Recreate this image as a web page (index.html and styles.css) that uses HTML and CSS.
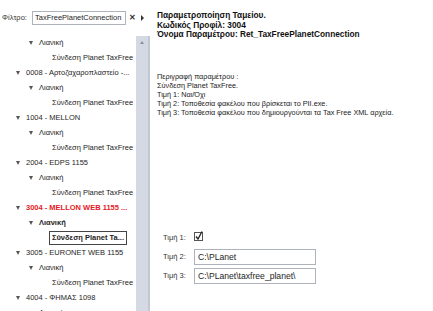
FILE: index.html
```html
<!DOCTYPE html>
<html lang="el">
<head>
  <meta charset="UTF-8">
  <title>Παραμετροποίηση Ταμείου</title>
  <link rel="stylesheet" href="styles.css">
</head>
<body>
  <div class="app">

    <!-- left: filter + tree -->
    <div class="side">
      <div class="filter">
        <span class="filter-label">Φίλτρο:</span>
        <div class="filter-box">TaxFreePlanetConnection</div>
        <span class="filter-clear">✕</span>
        <span class="filter-go"></span>
      </div>
      <div class="tree-wrap">
        <ul class="tree">
          <li class="node lvl2"><i class="arrow"></i>Λιανική</li>
          <li class="node lvl3">Σύνδεση Planet TaxFree</li>
          <li class="node lvl1"><i class="arrow"></i>0008 - Αρτοζαχαροπλαστείο -...</li>
          <li class="node lvl2"><i class="arrow"></i>Λιανική</li>
          <li class="node lvl3">Σύνδεση Planet TaxFree</li>
          <li class="node lvl1"><i class="arrow"></i>1004 - MELLON</li>
          <li class="node lvl2"><i class="arrow"></i>Λιανική</li>
          <li class="node lvl3">Σύνδεση Planet TaxFree</li>
          <li class="node lvl1"><i class="arrow"></i>2004 - EDPS 1155</li>
          <li class="node lvl2"><i class="arrow"></i>Λιανική</li>
          <li class="node lvl3">Σύνδεση Planet TaxFree</li>
          <li class="node lvl1 active"><i class="arrow"></i>3004 - MELLON WEB 1155 ...</li>
          <li class="node lvl2 bold"><i class="arrow"></i>Λιανική</li>
          <li class="node lvl3"><span class="selected">Σύνδεση Planet Ta...</span></li>
          <li class="node lvl1"><i class="arrow"></i>3005 - EURONET WEB 1155</li>
          <li class="node lvl2"><i class="arrow"></i>Λιανική</li>
          <li class="node lvl3">Σύνδεση Planet TaxFree</li>
          <li class="node lvl1"><i class="arrow"></i>4004 - ΦΗΜΑΣ 1098</li>
          <li class="node lvl2"><i class="arrow"></i>Λιανική</li>
        </ul>
        <div class="scrollbar">
          <span class="scroll-up"></span>
        </div>
      </div>
    </div>

    <!-- right: parameter details -->
    <div class="main">
      <div class="header">
        <div>Παραμετροποίηση Ταμείου.</div>
        <div>Κωδικός Προφίλ: 3004</div>
        <div>Όνομα Παραμέτρου: Ret_TaxFreePlanetConnection</div>
      </div>
      <div class="desc">
        <div>Περιγραφή παραμέτρου :</div>
        <div>Σύνδεση Planet TaxFree.</div>
        <div>Τιμή 1: Ναι/Όχι</div>
        <div>Τιμή 2: Τοποθεσία φακέλου που βρίσκεται το PII.exe.</div>
        <div>Τιμή 3: Τοποθεσία φακέλου που δημιουργούνται τα Tax Free XML αρχεία.</div>
      </div>
      <div class="values">
        <div class="value-row">
          <span class="value-label">Τιμή 1:</span>
          <span class="check">
            <svg width="9" height="10" viewBox="0 0 9 10"><rect x="0.5" y="1.5" width="8" height="8" fill="#fff" stroke="#555"/><path d="M2 5.5 L4 8 L8 0.5" fill="none" stroke="#222" stroke-width="1.3"/></svg>
          </span>
        </div>
        <div class="value-row">
          <span class="value-label">Τιμή 2:</span>
          <div class="value-box">C:\PLanet</div>
        </div>
        <div class="value-row">
          <span class="value-label">Τιμή 3:</span>
          <div class="value-box">C:\PLanet\taxfree_planet\</div>
        </div>
      </div>
    </div>

  </div>
</body>
</html>
```

FILE: styles.css
```css
html, body {
  margin: 0;
  padding: 0;
  background: #fff;
  font-family: 'Liberation Sans', Arial, sans-serif;
  color: #1e1e1e;
  overflow: hidden;
}

.app {
  display: flex;
  width: 433px;
  height: 311px;
}

.side {
  width: 150px;
  display: flex;
  flex-direction: column;
}

.filter {
  display: flex;
  align-items: center;
  height: 35px;
  padding-left: 2px;
  font-size: 7.5px;
}

.filter-label {
  color: #333;
  width: 30px;
}

.filter-box {
  width: 94px;
  height: 14px;
  line-height: 12px;
  border: 1px solid #adb2bb;
  padding-left: 2px;
  box-sizing: border-box;
  font-size: 7.5px;
  white-space: nowrap;
  overflow: hidden;
}

.filter-clear {
  font-size: 8px;
  font-weight: bold;
  margin-left: 3px;
  color: #333;
}

.filter-go {
  width: 0;
  height: 0;
  margin-left: 5px;
  border-left: 3px solid #333;
  border-top: 3px solid transparent;
  border-bottom: 3px solid transparent;
}

.tree-wrap {
  flex: 1;
  display: flex;
  overflow: hidden;
}

.tree {
  list-style: none;
  margin: 0;
  padding: 0;
  flex: 1;
  font-size: 7.5px;
}

.node {
  height: 15px;
  line-height: 15px;
  display: flex;
  align-items: center;
  white-space: nowrap;
}

.lvl1 { padding-left: 16px; }
.lvl2 { padding-left: 29px; }
.lvl3 { padding-left: 52px; }

.arrow {
  width: 0;
  height: 0;
  margin-right: 6px;
  border-top: 4px solid #555;
  border-left: 2.5px solid transparent;
  border-right: 2.5px solid transparent;
}

.active {
  color: #e8191f;
  font-weight: bold;
}

.bold {
  font-weight: bold;
}

.selected {
  font-weight: bold;
  border: 1px solid #444;
  padding: 0 2px;
  margin-left: -3px;
  line-height: 12px;
}

.scrollbar {
  width: 12px;
  margin-top: 1px;
  background: #d5d9e3;
  border-right: 2px solid #c3c7d2;
  display: flex;
  justify-content: center;
}

.scroll-up {
  margin-top: 5px;
  width: 0;
  height: 0;
  border-bottom: 3px solid #8a8f9c;
  border-left: 2.5px solid transparent;
  border-right: 2.5px solid transparent;
}

.main {
  flex: 1;
  padding-left: 7px;
  display: flex;
  flex-direction: column;
}

.header {
  margin-top: 11px;
  font-size: 8.3px;
  font-weight: bold;
  line-height: 9.5px;
  color: #111;
}

.desc {
  margin-top: 32px;
  font-size: 7.3px;
  line-height: 9px;
  color: #222;
}

.values {
  margin-top: 113px;
  padding-left: 6px;
  display: flex;
  flex-direction: column;
  gap: 3px;
}

.value-row {
  display: flex;
  align-items: center;
  height: 16px;
  font-size: 7.5px;
}

.value-label {
  width: 31px;
  color: #333;
}

.check {
  display: flex;
  margin-top: -4px;
}

.value-box {
  width: 122px;
  height: 16px;
  line-height: 14px;
  border: 1px solid #adb2bb;
  box-sizing: border-box;
  padding-left: 3px;
  font-size: 8.6px;
}
```
